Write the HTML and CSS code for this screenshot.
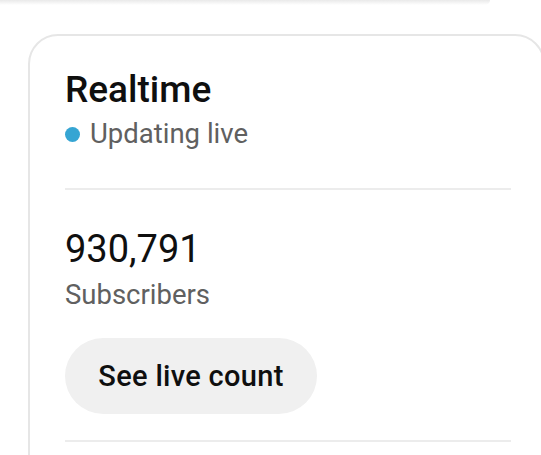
FILE: index.html
```html
<!DOCTYPE html>
<html lang="en">
<head>
  <meta charset="UTF-8" />
  <meta name="viewport" content="width=device-width, initial-scale=1.0"/>
  <title>Realtime</title>
  <link rel="stylesheet" href="styles.css">
</head>
<body>
  <div class="top-shade"></div>

  <div class="card">
    <h2 class="card-title">Realtime</h2>
    <div class="live">
      <span class="live-dot"></span>
      <span>Updating live</span>
    </div>

    <hr class="divider">

    <div class="count">930,791</div>
    <div class="count-label">Subscribers</div>
    <button class="btn">See live count</button>

    <hr class="divider">
  </div>
</body>
</html>
```

FILE: styles.css
```css
html, body {
  height: 100%;
  overflow: hidden;
}
body {
  margin: 0;
  background: #fff;
  color: #0f0f0f;
  font-family: Roboto, "Noto Sans", Arial, sans-serif;
}
.top-shade {
  width: 490px;
  height: 5px;
  background: linear-gradient(#e9e9e9, #fff);
  border-bottom-right-radius: 8px;
}
.card {
  width: 446px;
  margin: 29px 0 0 28px;
  padding: 32px 32px 0 35px;
  border: 2px solid #e6e6e6;
  border-radius: 30px;
  height: 600px;
}
.card-title {
  margin: 0;
  font-size: 37px;
  line-height: 44px;
  font-weight: 500;
}
.live {
  display: flex;
  align-items: center;
  gap: 10px;
  margin-top: 4px;
  font-size: 27.5px;
  line-height: 36px;
  color: #606060;
}
.live-dot {
  width: 15px;
  height: 15px;
  border-radius: 50%;
  background: #36a5d3;
}
.divider {
  margin: 36px 0 0;
  border: none;
  height: 2px;
  background: #ececec;
}
.count {
  margin-top: 37px;
  font-size: 38px;
  line-height: 44px;
  font-weight: 400;
}
.count-label {
  margin-top: 6px;
  font-size: 27.5px;
  line-height: 36px;
  color: #606060;
}
.btn {
  display: block;
  width: 252px;
  height: 76px;
  margin-top: 25px;
  border: none;
  border-radius: 38px;
  background: #f0f0f0;
  color: #0f0f0f;
  font-family: inherit;
  font-size: 29px;
  letter-spacing: 0.3px;
  font-weight: 500;
}
.btn + .divider {
  margin-top: 26px;
}
```
